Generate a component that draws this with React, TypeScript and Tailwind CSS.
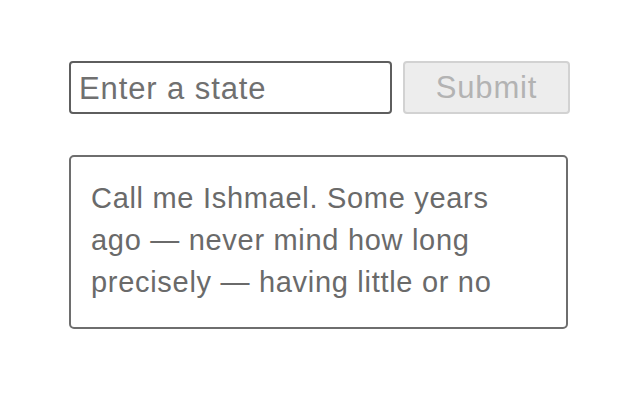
import React, { useState } from 'react';

const lines = [
  'Call me Ishmael. Some years',
  'ago — never mind how long',
  'precisely — having little or no',
];

const App: React.FC = () => {
  const [value, setValue] = useState('');

  return (
    <div className="w-[640px] h-[400px] bg-white font-['Liberation_Sans',Arial,sans-serif]">
      <div className="pt-[61px] pl-[69px] w-[571px]">
        <div className="flex gap-[11px]">
          <input
            value={value}
            onChange={e => setValue(e.target.value)}
            placeholder="Enter a state"
            className="shrink-0 w-[323px] h-[53px] rounded-[4px] border-2 border-[#5e5e5e] pl-[8px] pr-[8px] pt-[2px] text-[31px] tracking-[0.9px] text-[#555] placeholder:text-[#707070] outline-none"
          />
          <button
            disabled
            className="shrink-0 w-[167px] h-[53px] rounded-[4px] border-2 border-[#d2d2d2] bg-[#ededed] pt-[2px] text-[31px] tracking-[0.8px] text-[#b3b3b3]"
          >
            Submit
          </button>
        </div>

        <div className="mt-[41px] w-[499px] h-[174px] rounded-[5px] border-2 border-[#6e6e6e] pt-[20px] px-[20px] text-[29px] tracking-[0.7px] leading-[42px] text-[#6a6a6a] overflow-hidden">
          {lines.map(line => (
            <div key={line} className="whitespace-nowrap">{line}</div>
          ))}
        </div>
      </div>
    </div>
  );
};

export default App;
